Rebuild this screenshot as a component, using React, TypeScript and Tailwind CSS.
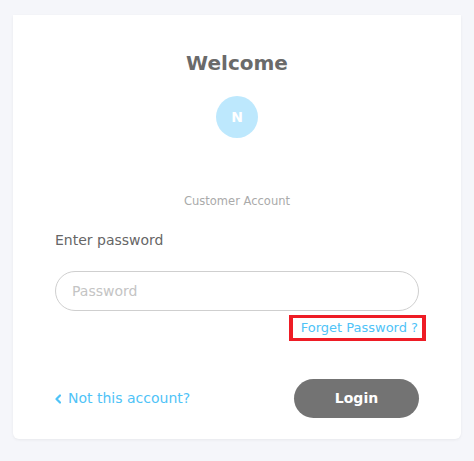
const App = () => {
  return (
    <div className="min-h-[461px] bg-[#f5f6fa] px-[13px] pt-[15px] font-['DejaVu_Sans',sans-serif]">
      <div className="flex w-[448px] flex-col rounded-b-[6px] bg-white px-[42px] pt-[34px] pb-[21px] shadow-[0_1px_3px_rgba(0,0,0,0.06)]">
        <h1 className="text-center text-[20px] leading-[28px] font-bold text-[#6a6a6a]">Welcome</h1>

        <div className="mx-auto mt-[19px] flex h-[42px] w-[42px] items-center justify-center rounded-full bg-[#bde8fd]">
          <span className="text-[14px] font-bold text-white">N</span>
        </div>

        <p className="mt-[55px] text-center text-[11.5px] leading-[16px] text-[#aaa]">Customer Account</p>

        <label className="mt-[21px] text-[14px] leading-[20px] text-[#666]">Enter password</label>

        <input
          type="password"
          placeholder="Password"
          className="mt-[21px] h-[40px] rounded-full border border-[#cfcfcf] px-[16px] text-[14px] text-[#666] outline-none placeholder:text-[#c4c4c4]"
        />

        <div className="mt-[4px] -mr-[7px] flex justify-end">
          <a className="flex h-[26px] items-center border-x-4 border-y-[3px] border-[#ee1c25] pr-[4px] pl-[8px] text-[13px] text-[#4fc3f7]">
            Forget Password ?
          </a>
        </div>

        <div className="mt-[38px] flex items-center justify-between">
          <a className="flex items-center gap-[7px] text-[14px] text-[#4fc3f7]">
            <svg width="6" height="10" viewBox="0 0 6 10" fill="none">
              <polyline points="5,1.5 1.5,5 5,8.5" stroke="currentColor" strokeWidth="2.2" strokeLinecap="round" strokeLinejoin="round" />
            </svg>
            Not this account?
          </a>
          <button className="h-[39px] w-[125px] rounded-full bg-[#737373] text-[14px] font-bold text-white">
            Login
          </button>
        </div>
      </div>
    </div>
  );
};

export default App;
